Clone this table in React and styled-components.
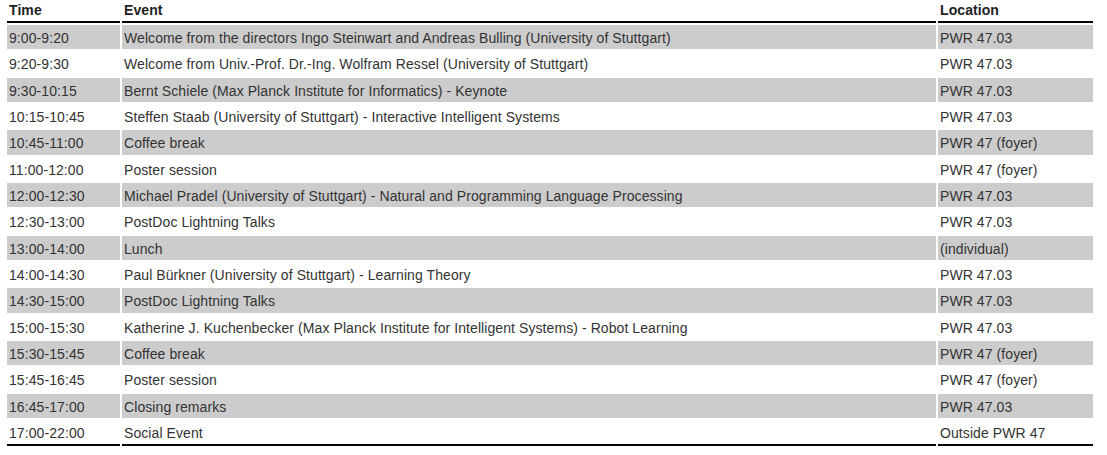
import React from "react";
import styled, { createGlobalStyle } from "styled-components";

const Global = createGlobalStyle`
  html, body { margin: 0; padding: 0; background: #fff; }
  body { font-family: "Liberation Sans", Arial, sans-serif; color: #333; }
`;

const Page = styled.div`
  padding: 0 5px;
`;

const Table = styled.table`
  width: 1090px;
  border-collapse: separate;
  border-spacing: 2px;
  table-layout: fixed;
  font-size: 14px;
  letter-spacing: 0.08px;
`;

const Col = styled.col`
  width: ${(p) => p.$w}px;
`;

const Th = styled.th`
  text-align: left;
  font-weight: bold;
  color: #222;
  line-height: 14px;
  padding: 1px 1px 4px 2px;
  border-bottom: 2px solid #000;
`;

const Row = styled.tr`
  background: ${(p) => (p.$shaded ? "#cccccc" : "transparent")};
`;

const Td = styled.td`
  line-height: 20.33px;
  padding: 3px 1px 1px 2px;
  white-space: nowrap;
  overflow: hidden;
  border-bottom: ${(p) => (p.$last ? "2px solid #000" : "0")};
`;

const rows = [
  ["9:00-9:20", "Welcome from the directors Ingo Steinwart and Andreas Bulling (University of Stuttgart)", "PWR 47.03"],
  ["9:20-9:30", "Welcome from Univ.-Prof. Dr.-Ing. Wolfram Ressel (University of Stuttgart)", "PWR 47.03"],
  ["9:30-10:15", "Bernt Schiele (Max Planck Institute for Informatics) - Keynote", "PWR 47.03"],
  ["10:15-10:45", "Steffen Staab (University of Stuttgart) - Interactive Intelligent Systems", "PWR 47.03"],
  ["10:45-11:00", "Coffee break", "PWR 47 (foyer)"],
  ["11:00-12:00", "Poster session", "PWR 47 (foyer)"],
  ["12:00-12:30", "Michael Pradel (University of Stuttgart) - Natural and Programming Language Processing", "PWR 47.03"],
  ["12:30-13:00", "PostDoc Lightning Talks", "PWR 47.03"],
  ["13:00-14:00", "Lunch", "(individual)"],
  ["14:00-14:30", "Paul Bürkner (University of Stuttgart) - Learning Theory", "PWR 47.03"],
  ["14:30-15:00", "PostDoc Lightning Talks", "PWR 47.03"],
  ["15:00-15:30", "Katherine J. Kuchenbecker (Max Planck Institute for Intelligent Systems) - Robot Learning", "PWR 47.03"],
  ["15:30-15:45", "Coffee break", "PWR 47 (foyer)"],
  ["15:45-16:45", "Poster session", "PWR 47 (foyer)"],
  ["16:45-17:00", "Closing remarks", "PWR 47.03"],
  ["17:00-22:00", "Social Event", "Outside PWR 47"],
];

export default function App() {
  return (
    <Page>
      <Global />
      <Table>
        <colgroup>
          <Col $w={113} />
          <Col $w={814} />
          <Col $w={155} />
        </colgroup>
        <thead>
          <tr>
            <Th>Time</Th>
            <Th>Event</Th>
            <Th>Location</Th>
          </tr>
        </thead>
        <tbody>
          {rows.map((r, i) => {
            const last = i === rows.length - 1;
            return (
              <Row key={i} $shaded={i % 2 === 0}>
                <Td $last={last}>{r[0]}</Td>
                <Td $last={last}>{r[1]}</Td>
                <Td $last={last}>{r[2]}</Td>
              </Row>
            );
          })}
        </tbody>
      </Table>
    </Page>
  );
}
